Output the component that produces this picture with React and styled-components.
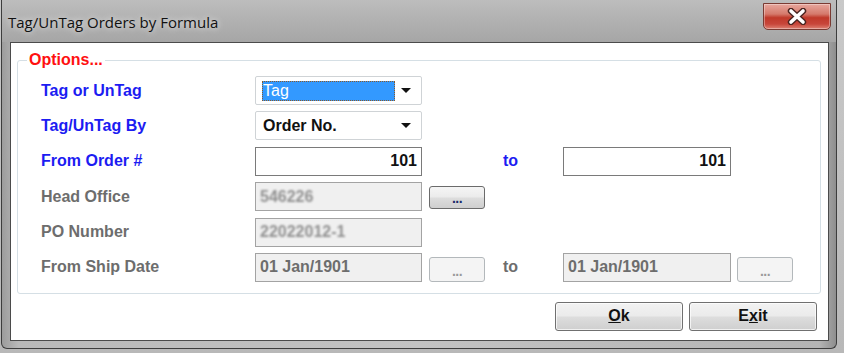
import styled, { createGlobalStyle } from "styled-components";

const Global = createGlobalStyle`
  html, body { margin: 0; padding: 0; }
  body {
    background: #c4c4c4;
    font-family: "Liberation Sans", Arial, sans-serif;
  }
`;

const Page = styled.div`
  width: 844px;
  height: 353px;
  overflow: hidden;
  background: linear-gradient(#c9c9c9, #b8b8b8);
`;

const Window = styled.div`
  margin-left: 1px;
  width: 836px;
  height: 349px;
  box-sizing: border-box;
  display: flex;
  flex-direction: column;
  border: 1px solid #3d3d3d;
  border-top: none;
  border-radius: 0 0 6px 6px;
  background: linear-gradient(90deg, #9c9c9c 0%, #b9b9b9 2%, #c3c3c3 50%, #b4b4b4 98%, #8e8e8e 100%);
`;

const TitleBar = styled.div`
  height: 42px;
  flex: none;
  display: flex;
  align-items: flex-start;
  justify-content: space-between;
  padding: 0 5px 0 6px;
  background: linear-gradient(#bdbdbd 0%, #b3b3b3 40%, #a6a6a6 100%);
`;

const Title = styled.div`
  margin-top: 12px;
  font-family: "Open Sans", "Noto Sans", sans-serif;
  font-size: 15px;
  line-height: 20px;
  color: #111;
  text-shadow: 0 0 6px rgba(255, 255, 255, 0.9);
`;

const CloseButton = styled.div`
  margin-top: 3px;
  width: 68px;
  height: 27px;
  box-sizing: border-box;
  display: flex;
  align-items: center;
  justify-content: center;
  border: 1px solid #7a3b33;
  border-radius: 0 0 5px 5px;
  background: linear-gradient(#e7a79d 0%, #d57a6c 40%, #c0392a 55%, #c8463a 80%, #dd8273 100%);
  box-shadow: inset 0 0 0 1px rgba(255, 255, 255, 0.35);
`;

const Client = styled.div`
  flex: 1;
  margin: 0 7px 7px 8px;
  display: flex;
  flex-direction: column;
  padding: 8px 7px 0 6px;
  background: #fff;
  border: 1px solid #4b4b4b;
`;

const GroupBox = styled.fieldset`
  margin: 0;
  padding: 7px 0 11px 23px;
  border: 1px solid #d5dfe5;
  border-radius: 3px;
  min-width: 0;
`;

const Legend = styled.legend`
  margin-left: -14px;
  padding: 0 2px;
  font-size: 16px;
  line-height: 18px;
  font-weight: bold;
  color: #ff1010;
`;

const Form = styled.div`
  display: grid;
  grid-template-columns: 214px 167px 7px 56px 18px 60px 168px 6px 56px;
  grid-auto-rows: 29px;
  row-gap: 6.4px;
  align-items: center;
`;

const Caption = styled.div`
  font-size: 16px;
  font-weight: bold;
  white-space: nowrap;
  color: ${(p) => (p.$off ? "#6d6d6d" : "#1c1cf2")};
  grid-column: ${(p) => p.$col || 1};
`;

const Combo = styled.div`
  grid-column: 2;
  height: 100%;
  box-sizing: border-box;
  display: flex;
  align-items: center;
  padding: 0 6px;
  border: 1px solid #cfd3d6;
  border-radius: 2px;
  background: #fff;
  font-size: 16px;
  font-weight: bold;
  color: #111;
`;

const ComboValue = styled.div`
  flex: 1;
  height: 20px;
  line-height: 20px;
  box-sizing: border-box;
  padding-left: 1px;
  margin-right: 6px;
  ${(p) =>
    p.$selected &&
    `
    background: #3399ff;
    color: #fff;
    font-weight: normal;
    outline: 1px dotted #8a5a2a;
    outline-offset: -1px;
  `}
`;

const Arrow = styled.div`
  width: 0;
  height: 0;
  margin-right: 4px;
  border-left: 5px solid transparent;
  border-right: 5px solid transparent;
  border-top: 5px solid #111;
`;

const TextBox = styled.div`
  grid-column: ${(p) => p.$col || 2};
  height: 100%;
  box-sizing: border-box;
  display: flex;
  align-items: center;
  justify-content: ${(p) => (p.$right ? "flex-end" : "flex-start")};
  padding: 0 4px;
  border: 1px solid ${(p) => (p.$off ? "#a3a3a3" : "#7a7a7a")};
  background: ${(p) => (p.$off ? "#f0f0f0" : "#fff")};
  font-size: 16px;
  font-weight: bold;
  white-space: nowrap;
  color: ${(p) => (p.$off ? "#6d6d6d" : "#111")};
`;

const Blurred = styled.span`
  display: inline-block;
  color: #8f8f8f;
  filter: blur(${(p) => p.$amount || 1}px);
`;

const DotsButton = styled.div`
  grid-column: ${(p) => p.$col || 4};
  align-self: end;
  height: ${(p) => (p.$off ? "25px" : "23px")};
  margin-bottom: ${(p) => (p.$off ? "0" : "2px")};
  box-sizing: border-box;
  display: flex;
  align-items: flex-end;
  justify-content: center;
  padding-bottom: 5px;
  border: 1px solid ${(p) => (p.$off ? "#b3b8bb" : "#6b6b6b")};
  border-radius: 3px;
  background: ${(p) =>
    p.$off
      ? "#f4f4f4"
      : "linear-gradient(#f5f5f5 0%, #ececec 45%, #dcdcdc 55%, #cfcfcf 100%)"};
  font-size: 14px;
  line-height: 9px;
  font-weight: bold;
  color: ${(p) => (p.$off ? "#9a9a9a" : "#1a2a6a")};
  letter-spacing: -0.5px;
`;

const ButtonRow = styled.div`
  display: flex;
  justify-content: flex-end;
  gap: 6px;
  margin-top: 8px;
  padding-right: 4px;
`;

const Button = styled.div`
  width: 128px;
  height: 29px;
  box-sizing: border-box;
  display: flex;
  align-items: center;
  justify-content: center;
  border: 1px solid #707070;
  border-radius: 3px;
  background: linear-gradient(#f2f2f2 0%, #ebebeb 48%, #dddddd 52%, #cfcfcf 100%);
  box-shadow: inset 0 0 0 1px rgba(255, 255, 255, 0.7);
  font-size: 16px;
  font-weight: bold;
  color: #111;
`;

function CloseGlyph() {
  return (
    <svg width="22" height="17" viewBox="0 0 22 17">
      <path d="M5 3 L17 14 M17 3 L5 14" stroke="#4a2420" strokeWidth="6.4" strokeLinecap="round" />
      <path d="M5 3 L17 14 M17 3 L5 14" stroke="#fff" strokeWidth="3.6" strokeLinecap="round" />
    </svg>
  );
}

export default function App() {
  return (
    <>
      <Global />
      <Page>
        <Window>
          <TitleBar>
            <Title>Tag/UnTag Orders by Formula</Title>
            <CloseButton>
              <CloseGlyph />
            </CloseButton>
          </TitleBar>
          <Client>
            <GroupBox>
              <Legend>Options...</Legend>
              <Form>
                <Caption>Tag or UnTag</Caption>
                <Combo>
                  <ComboValue $selected>Tag</ComboValue>
                  <Arrow />
                </Combo>

                <Caption>Tag/UnTag By</Caption>
                <Combo>
                  <ComboValue>Order No.</ComboValue>
                  <Arrow />
                </Combo>

                <Caption>From Order #</Caption>
                <TextBox $right>101</TextBox>
                <Caption $col="6">to</Caption>
                <TextBox $col="7" $right>101</TextBox>

                <Caption $off>Head Office</Caption>
                <TextBox $off>
                  <Blurred>546226</Blurred>
                </TextBox>
                <DotsButton>...</DotsButton>

                <Caption $off>PO Number</Caption>
                <TextBox $off>
                  <Blurred $amount={1.3}>22022012-1</Blurred>
                </TextBox>

                <Caption $off>From Ship Date</Caption>
                <TextBox $off>01 Jan/1901</TextBox>
                <DotsButton $off>...</DotsButton>
                <Caption $off $col="6">to</Caption>
                <TextBox $off $col="7">01 Jan/1901</TextBox>
                <DotsButton $off $col="9">...</DotsButton>
              </Form>
            </GroupBox>
            <ButtonRow>
              <Button>
                <u>O</u>k
              </Button>
              <Button>
                E<u>x</u>it
              </Button>
            </ButtonRow>
          </Client>
        </Window>
      </Page>
    </>
  );
}
